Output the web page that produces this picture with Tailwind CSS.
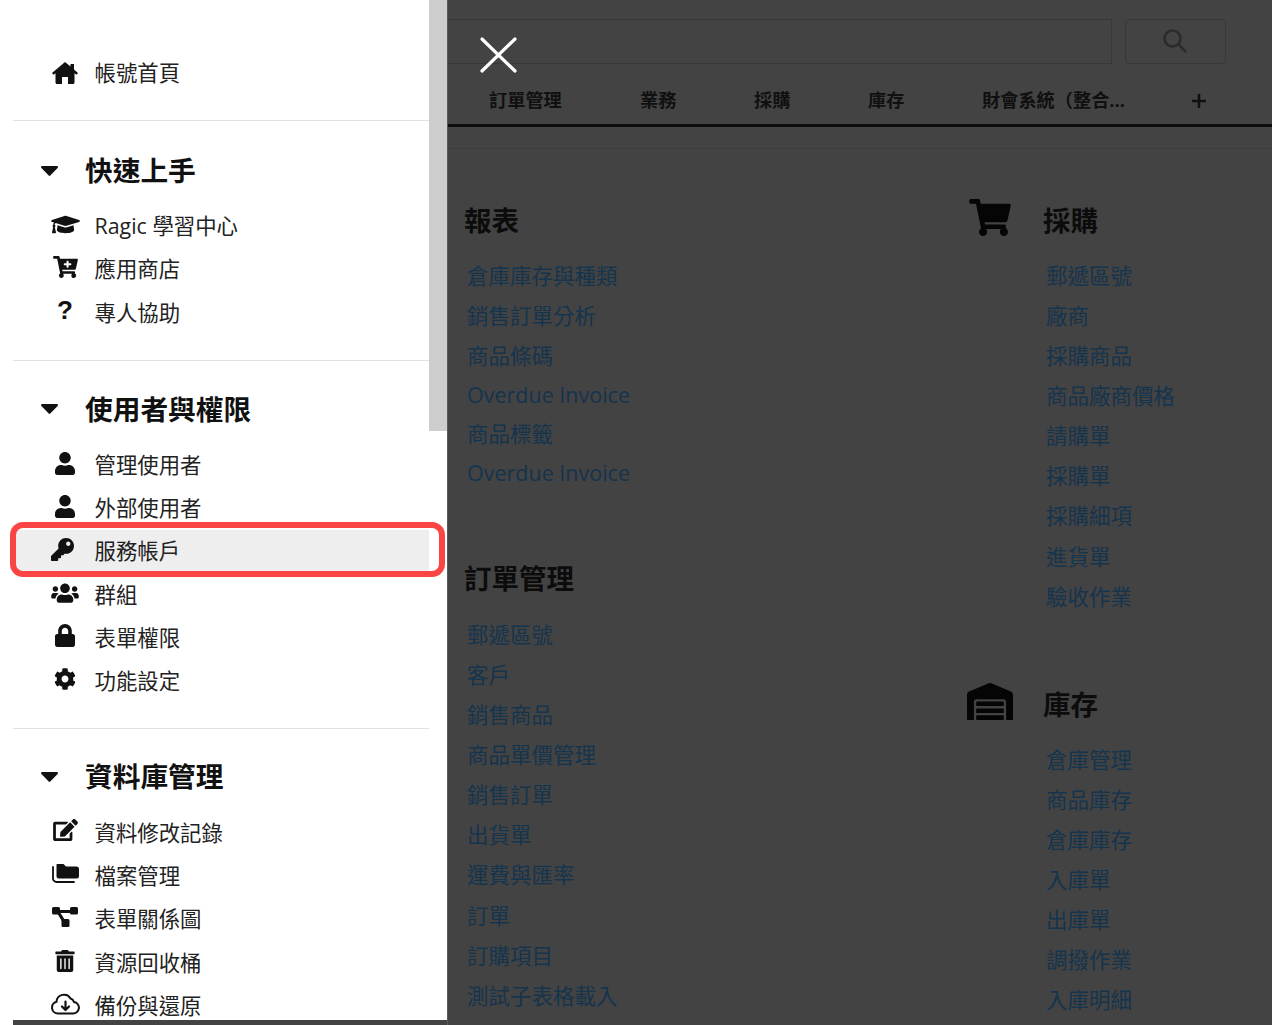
<!DOCTYPE html>
<html lang="zh-Hant">
<head>
  <meta charset="UTF-8" />
  <title>Ragic</title>
  <script src="https://cdn.jsdelivr.net/npm/@tailwindcss/browser@4"></script>
</head>
<body class="bg-[#434343]">
  <div class="relative flex w-[1272px] h-[1025px] overflow-hidden bg-[#434343] font-['Open_Sans','Noto_Sans_CJK_TC',sans-serif]">
    <!-- left strip runs past the panel bottom -->
    <div class="w-[13px] h-full bg-white shrink-0"></div>

    <!-- SIDEBAR -->
    <aside class="flex w-[434px] h-[1020px] bg-white shrink-0 overflow-hidden">
      <div class="w-[416px] text-[21.4px] text-[#222]">
        <section class="pt-[52px] pb-[25px] border-b border-[#dde2e2]">
          <div class="flex items-center h-[43px]">
            <span class="flex justify-center items-center w-[34px] ml-[35px] mr-[12.5px] -translate-y-[1px]"><svg class="w-[26px] h-[22px]" viewBox="0 0 26 22" fill="#111"><path d="M13 0l5.500 4.500V2H22v5.500l4 3.500-1.500 1.800-2-1.600v9.300c0 .8-.7 1.500-1.500 1.500h-5v-7h-6v7H5c-.8 0-1.500-.7-1.500-1.500v-9.300l-2 1.600L0 11z"/></svg></span>
            <span>帳號首頁</span>
          </div>
        </section>

        <section class="pt-[27.5px] pb-[26px] border-b border-[#dde2e2]">
          <div class="flex items-center h-[44px] mb-[12px]">
            <svg class="w-[17px] h-[10px] ml-[28px] mr-[27px]" viewBox="0 0 17 10" fill="#111"><path d="M1.2 0h14.600c1 0 1.500 1.200.8 1.900L9.300 9.500c-.4.500-1.200.5-1.600 0L.4 1.900C-.3 1.200.2 0 1.200 0z"/></svg>
            <h2 class="text-[27.7px] font-bold text-[#111]">快速上手</h2>
          </div>
          <div class="flex items-center h-[43.33px]">
            <span class="flex justify-center items-center w-[34px] ml-[35px] mr-[12.5px] -translate-y-[2px]"><svg class="w-[29px] h-[23px]" viewBox="0 0 640 512" fill="#111"><path d="M622.34 153.2L343.4 67.5c-15.2-4.67-31.6-4.67-46.79 0L17.66 153.2c-23.54 7.23-23.54 38.36 0 45.59l48.63 14.94c-10.67 13.19-17.23 29.28-17.88 46.9C38.78 266.15 32 276.11 32 288c0 10.78 5.68 19.85 13.86 25.65L20.33 428.53C18.11 438.52 25.71 448 35.94 448h56.11c10.24 0 17.84-9.48 15.62-19.47L82.14 313.65C90.32 307.85 96 298.78 96 288c0-11.57-6.47-21.25-15.66-26.87.76-15.02 8.44-28.3 20.69-36.72L296.6 284.5c9.06 2.78 26.44 6.25 46.79 0l278.95-85.7c23.55-7.24 23.55-38.36 0-45.6zM352.79 315.09c-28.53 8.76-52.84 3.92-65.59 0l-145.02-44.55L128 384c0 35.35 85.96 64 192 64s192-28.65 192-64l-14.18-113.47-145.03 44.56z"/></svg></span>
            <span>Ragic 學習中心</span>
          </div>
          <div class="flex items-center h-[43.33px]">
            <span class="flex justify-center items-center w-[34px] ml-[35px] mr-[12.5px] -translate-y-[2px]"><svg class="w-[25px] h-[22px]" viewBox="0 0 576 512" fill="#111"><path d="M504.717 320H211.572l6.545 32h268.418c15.401 0 26.816 14.301 23.403 29.319l-5.517 24.276C523.112 414.668 536 433.828 536 456c0 31.202-25.519 56.444-56.824 55.994-29.823-.429-54.35-24.631-55.155-54.447-.44-16.287 6.085-31.049 16.803-41.548H231.176C241.553 426.165 248 440.326 248 456c0 31.813-26.528 57.431-58.67 55.938-28.54-1.325-51.751-24.385-53.251-52.917-1.158-22.034 10.436-41.455 28.051-51.586L93.883 64H24C10.745 64 0 53.255 0 40V24C0 10.745 10.745 0 24 0h102.529c11.401 0 21.228 8.021 23.513 19.19L159.208 64H551.99c15.401 0 26.816 14.301 23.403 29.319l-47.273 208C525.637 312.246 515.923 320 504.717 320zM408 168h-48v-40c0-8.837-7.163-16-16-16h-16c-8.837 0-16 7.163-16 16v40h-48c-8.837 0-16 7.163-16 16v16c0 8.837 7.163 16 16 16h48v40c0 8.837 7.163 16 16 16h16c8.837 0 16-7.163 16-16v-40h48c8.837 0 16-7.163 16-16v-16c0-8.837-7.163-16-16-16z"/></svg></span>
            <span>應用商店</span>
          </div>
          <div class="flex items-center h-[43.33px]">
            <span class="flex justify-center items-center w-[34px] ml-[35px] mr-[12.5px] -translate-y-[2px] font-['Liberation_Sans',sans-serif] font-bold text-[26px] text-[#111]">?</span>
            <span>專人協助</span>
          </div>
        </section>

        <section class="pt-[26px] pb-[25px] border-b border-[#dde2e2]">
          <div class="flex items-center h-[44px] mb-[11.5px]">
            <svg class="w-[17px] h-[10px] ml-[28px] mr-[27px]" viewBox="0 0 17 10" fill="#111"><path d="M1.2 0h14.600c1 0 1.500 1.200.8 1.900L9.300 9.500c-.4.500-1.200.5-1.600 0L.4 1.900C-.3 1.200.2 0 1.200 0z"/></svg>
            <h2 class="text-[27.7px] font-bold text-[#111]">使用者與權限</h2>
          </div>
          <div class="flex items-center h-[43.33px]">
            <span class="flex justify-center items-center w-[34px] ml-[35px] mr-[12.5px] -translate-y-[1px]"><svg class="w-[20px] h-[23px]" viewBox="0 0 448 512" fill="#111"><path d="M224 256c70.7 0 128-57.3 128-128S294.7 0 224 0 96 57.3 96 128s57.3 128 128 128zm89.6 32h-16.7c-22.2 10.2-46.9 16-72.9 16s-50.6-5.8-72.9-16h-16.7C60.2 288 0 348.2 0 422.4V464c0 26.5 21.5 48 48 48h352c26.5 0 48-21.5 48-48v-41.6c0-74.2-60.2-134.4-134.4-134.4z"/></svg></span>
            <span>管理使用者</span>
          </div>
          <div class="flex items-center h-[43.33px]">
            <span class="flex justify-center items-center w-[34px] ml-[35px] mr-[12.5px] -translate-y-[1px]"><svg class="w-[20px] h-[23px]" viewBox="0 0 448 512" fill="#111"><path d="M224 256c70.7 0 128-57.3 128-128S294.7 0 224 0 96 57.3 96 128s57.3 128 128 128zm89.6 32h-16.7c-22.2 10.2-46.9 16-72.9 16s-50.6-5.8-72.9-16h-16.7C60.2 288 0 348.2 0 422.4V464c0 26.5 21.5 48 48 48h352c26.5 0 48-21.5 48-48v-41.6c0-74.2-60.2-134.4-134.4-134.4z"/></svg></span>
            <span>外部使用者</span>
          </div>
          <div class="flex items-center h-[43.33px] bg-[#eeeeee]">
            <span class="flex justify-center items-center w-[34px] ml-[32px] mr-[15.5px] -translate-y-[2px]"><svg class="w-[23px] h-[23px]" viewBox="0 0 512 512" fill="#111"><path d="M512 176.001C512 273.203 433.202 352 336 352c-11.22 0-22.19-1.062-32.827-3.069l-24.012 27.014A23.999 23.999 0 0 1 261.223 384H224v40c0 13.255-10.745 24-24 24h-40v40c0 13.255-10.745 24-24 24H24c-13.255 0-24-10.745-24-24v-78.059c0-6.365 2.529-12.47 7.029-16.971l161.802-161.802C163.108 213.814 160 195.271 160 176 160 78.798 238.797.001 335.999 0 433.488-.001 512 78.511 512 176.001zM336 128c0 26.51 21.49 48 48 48s48-21.49 48-48-21.49-48-48-48-48 21.49-48 48z"/></svg></span>
            <span>服務帳戶</span>
          </div>
          <div class="flex items-center h-[43.33px]">
            <span class="flex justify-center items-center w-[34px] ml-[35px] mr-[12.5px] -translate-y-[2px]"><svg class="w-[28px] h-[22px]" viewBox="0 0 640 512" fill="#111"><path d="M96 224c35.3 0 64-28.7 64-64s-28.7-64-64-64-64 28.7-64 64 28.7 64 64 64zm448 0c35.3 0 64-28.7 64-64s-28.7-64-64-64-64 28.7-64 64 28.7 64 64 64zm32 32h-64c-17.6 0-33.5 7.1-45.1 18.6 40.3 22.1 68.9 62 75.1 109.4h66c17.7 0 32-14.3 32-32v-32c0-35.3-28.7-64-64-64zm-256 0c61.9 0 112-50.1 112-112S381.9 32 320 32 208 82.1 208 144s50.1 112 112 112zm76.8 32h-8.3c-20.8 10-43.9 16-68.5 16s-47.6-6-68.5-16h-8.3C179.6 288 128 339.6 128 403.2V432c0 26.5 21.5 48 48 48h288c26.5 0 48-21.5 48-48v-28.8c0-63.6-51.6-115.2-115.2-115.2zm-223.7-13.4C161.5 263.1 145.6 256 128 256H64c-35.3 0-64 28.7-64 64v32c0 17.7 14.3 32 32 32h65.9c6.3-47.4 34.9-87.3 75.2-109.4z"/></svg></span>
            <span>群組</span>
          </div>
          <div class="flex items-center h-[43.33px]">
            <span class="flex justify-center items-center w-[34px] ml-[35px] mr-[12.5px] -translate-y-[2px]"><svg class="w-[20px] h-[23px]" viewBox="0 0 448 512" fill="#111"><path d="M400 224h-24v-72C376 68.2 307.8 0 224 0S72 68.2 72 152v72H48c-26.5 0-48 21.5-48 48v192c0 26.5 21.5 48 48 48h352c26.5 0 48-21.5 48-48V272c0-26.5-21.5-48-48-48zm-104 0H152v-72c0-39.7 32.3-72 72-72s72 32.3 72 72v72z"/></svg></span>
            <span>表單權限</span>
          </div>
          <div class="flex items-center h-[43.33px]">
            <span class="flex justify-center items-center w-[34px] ml-[35px] mr-[12.5px] -translate-y-[2px]"><svg class="w-[22px] h-[22px]" viewBox="0 0 512 512" fill="#111"><path d="M487.4 315.7l-42.6-24.6c4.3-23.2 4.3-47 0-70.2l42.6-24.6c4.9-2.8 7.1-8.6 5.5-14-11.1-35.6-30-67.8-54.7-94.6-3.8-4.1-10-5.1-14.8-2.3L380.8 110c-17.9-15.4-38.5-27.3-60.8-35.1V25.8c0-5.6-3.9-10.5-9.4-11.7-36.7-8.2-74.3-7.8-109.2 0-5.5 1.2-9.4 6.1-9.4 11.7V75c-22.2 7.9-42.8 19.8-60.8 35.1L88.7 85.5c-4.9-2.8-11-1.9-14.8 2.3-24.7 26.7-43.6 58.9-54.7 94.6-1.7 5.4.6 11.2 5.5 14L67.3 221c-4.3 23.2-4.3 47 0 70.2l-42.6 24.6c-4.9 2.8-7.1 8.6-5.5 14 11.1 35.6 30 67.8 54.7 94.6 3.8 4.1 10 5.1 14.8 2.3l42.6-24.6c17.9 15.4 38.5 27.3 60.8 35.1v49.2c0 5.6 3.9 10.5 9.4 11.7 36.7 8.2 74.3 7.8 109.2 0 5.5-1.2 9.4-6.1 9.4-11.7v-49.2c22.2-7.9 42.8-19.8 60.8-35.1l42.6 24.6c4.9 2.8 11 1.9 14.8-2.3 24.7-26.7 43.6-58.9 54.7-94.6 1.5-5.5-.7-11.3-5.6-14.1zM256 336c-44.1 0-80-35.9-80-80s35.9-80 80-80 80 35.9 80 80-35.9 80-80 80z"/></svg></span>
            <span>功能設定</span>
          </div>
        </section>

        <section class="pt-[26px]">
          <div class="flex items-center h-[44px] mb-[12px]">
            <svg class="w-[17px] h-[10px] ml-[28px] mr-[27px]" viewBox="0 0 17 10" fill="#111"><path d="M1.2 0h14.600c1 0 1.500 1.200.8 1.900L9.300 9.500c-.4.500-1.200.5-1.600 0L.4 1.900C-.3 1.200.2 0 1.200 0z"/></svg>
            <h2 class="text-[27.7px] font-bold text-[#111]">資料庫管理</h2>
          </div>
          <div class="flex items-center h-[43.33px]">
            <span class="flex justify-center items-center w-[34px] ml-[35px] mr-[12.5px] -translate-y-[3px]"><svg class="w-[25px] h-[22px]" viewBox="0 0 576 512" fill="#111"><path d="M402.6 83.2l90.2 90.2c3.8 3.8 3.8 10 0 13.8L274.4 405.6l-92.8 10.3c-12.4 1.4-22.9-9.1-21.5-21.5l10.3-92.8L388.8 83.2c3.8-3.8 10-3.8 13.8 0zm162-22.9l-48.8-48.8c-15.2-15.2-39.9-15.2-55.2 0l-35.4 35.4c-3.8 3.8-3.8 10 0 13.8l90.2 90.2c3.8 3.8 10 3.8 13.8 0l35.4-35.4c15.2-15.3 15.2-40 0-55.2zM384 346.2V448H64V128h229.8c3.2 0 6.2-1.3 8.5-3.5l40-40c7.6-7.6 2.2-20.5-8.5-20.5H48C21.5 64 0 85.5 0 112v352c0 26.5 21.5 48 48 48h352c26.5 0 48-21.5 48-48V306.2c0-10.7-12.9-16-20.5-8.5l-40 40c-2.2 2.3-3.5 5.3-3.5 8.5z"/></svg></span>
            <span>資料修改記錄</span>
          </div>
          <div class="flex items-center h-[43.33px]">
            <span class="flex justify-center items-center w-[34px] ml-[35px] mr-[12.5px] -translate-y-[2px]"><svg class="w-[27px] h-[19px]" viewBox="0 0 27 19" fill="#111"><path d="M5 0h6.500l2.500 2.500h10.500a2.500 2.500 0 0 1 2.500 2.500v7a2.500 2.500 0 0 1-2.500 2.500H7a2.500 2.500 0 0 1-2.500-2.500V1a1 1 0 0 1 .5-1z"/><path d="M1 3v11.500a3.500 3.500 0 0 0 3.500 3.500H22" fill="none" stroke="#111" stroke-width="1.800" stroke-linecap="round"/></svg></span>
            <span>檔案管理</span>
          </div>
          <div class="flex items-center h-[43.33px]">
            <span class="flex justify-center items-center w-[34px] ml-[35px] mr-[12.5px] -translate-y-[2px]"><svg class="w-[26px] h-[20px]" viewBox="0 0 26 20" fill="#111"><rect x="0" y="0" width="8" height="7.500" rx="1.500"/><rect x="18" y="0" width="8" height="7.500" rx="1.500"/><rect x="9.500" y="12" width="8" height="8" rx="1.500"/><path d="M6 3h14v3H8.500l5 8-2.500 2-6-10z"/></svg></span>
            <span>表單關係圖</span>
          </div>
          <div class="flex items-center h-[43.33px]">
            <span class="flex justify-center items-center w-[34px] ml-[35px] mr-[12.5px] -translate-y-[2px]"><svg class="w-[20px] h-[22px]" viewBox="0 0 448 512" fill="#111"><path d="M32 464a48 48 0 0 0 48 48h288a48 48 0 0 0 48-48V128H32zm272-256a16 16 0 0 1 32 0v224a16 16 0 0 1-32 0zm-96 0a16 16 0 0 1 32 0v224a16 16 0 0 1-32 0zm-96 0a16 16 0 0 1 32 0v224a16 16 0 0 1-32 0zM432 32H312l-9.400-18.700A24 24 0 0 0 281.100 0H166.800a23.720 23.720 0 0 0-21.400 13.300L136 32H16A16 16 0 0 0 0 48v32a16 16 0 0 0 16 16h416a16 16 0 0 0 16-16V48a16 16 0 0 0-16-16z"/></svg></span>
            <span>資源回收桶</span>
          </div>
          <div class="flex items-center h-[43.33px]">
            <span class="flex justify-center items-center w-[34px] ml-[35px] mr-[12.5px] -translate-y-[2px]"><svg class="w-[29px] h-[22px]" viewBox="0 0 29 22" fill="none" stroke="#111"><path d="M8 20.500H7a6 6 0 0 1-1.500-11.800A7.500 7.500 0 0 1 19.500 5.500a5 5 0 0 1 3.500 3.500 5.800 5.800 0 0 1-1.500 11.500z" stroke-width="2"/><path d="M14.500 8.500v8M11 13.500l3.500 3.500 3.500-3.500" stroke-width="2.200" stroke-linecap="round" stroke-linejoin="round"/></svg></span>
            <span>備份與還原</span>
          </div>
        </section>
      </div>
      <!-- scrollbar -->
      <div class="w-[18px] h-full bg-white">
        <div class="h-[431px] bg-[#cdcdcd]"></div>
      </div>
    </aside>

    <!-- DIMMED PAGE -->
    <main class="flex-1 min-w-0 border-l border-[#5a5a5a]">
      <div class="flex gap-[13px] mt-[19px] pr-[46px] h-[45px]">
        <div class="flex-1 border border-l-0 border-[#383838]"></div>
        <div class="flex justify-center items-center w-[101px] border border-[#383838] rounded-[4px]">
          <svg class="w-[26px] h-[26px] mb-[2px] -translate-x-[1px]" viewBox="0 0 26 26" fill="none" stroke="#2b2b2b" stroke-width="2.600"><circle cx="10.500" cy="10.500" r="8"/><path d="M16.500 16.500l7 7" stroke-linecap="round"/></svg>
        </div>
      </div>

      <nav class="flex items-center h-[49px] mt-[14px] pl-[41px] pt-[1px] pb-[2px] border-b-[3px] border-[#0d0d0d] text-[18.2px] font-bold text-[#101010]">
        <a class="w-[151px]">訂單管理</a>
        <a class="w-[114px]">業務</a>
        <a class="w-[114px]">採購</a>
        <a class="w-[114px]">庫存</a>
        <a class="w-[209px] whitespace-nowrap">財會系統（整合...</a>
        <svg class="w-[16px] h-[16px]" viewBox="0 0 16 16" stroke="#101010" stroke-width="2.500"><path d="M8 1v14M1 8h14"/></svg>
      </nav>

      <div class="flex mt-[21px] pl-[16px] border-t border-[#3d3d3d] text-[21.5px] text-[#15344e]">
        <div class="w-[503px] shrink-0">
          <h3 class="flex items-center h-[40px] mt-[52px] mb-[15px] text-[27.5px] font-bold text-[#0c0c0c]">報表</h3>
          <div class="ml-[3px] flex flex-col">
            <a class="flex items-center h-[40px]">倉庫庫存與種類</a>
            <a class="flex items-center h-[40px]">銷售訂單分析</a>
            <a class="flex items-center h-[40px]">商品條碼</a>
            <a class="flex items-center h-[39px]">Overdue Invoice</a>
            <a class="flex items-center h-[39px]">商品標籤</a>
            <a class="flex items-center h-[39px]">Overdue Invoice</a>
          </div>
          <h3 class="flex items-center h-[40px] mt-[66px] mb-[16px] text-[27.5px] font-bold text-[#0c0c0c]">訂單管理</h3>
          <div class="ml-[3px] flex flex-col">
            <a class="flex items-center h-[40.1px] shrink-0">郵遞區號</a>
            <a class="flex items-center h-[40.1px] shrink-0">客戶</a>
            <a class="flex items-center h-[40.1px] shrink-0">銷售商品</a>
            <a class="flex items-center h-[40.1px] shrink-0">商品單價管理</a>
            <a class="flex items-center h-[40.1px] shrink-0">銷售訂單</a>
            <a class="flex items-center h-[40.1px] shrink-0">出貨單</a>
            <a class="flex items-center h-[40.1px] shrink-0">運費與匯率</a>
            <a class="flex items-center h-[40.1px] shrink-0">訂單</a>
            <a class="flex items-center h-[40.1px] shrink-0">訂購項目</a>
            <a class="flex items-center h-[40.1px] shrink-0">測試子表格載入</a>
          </div>
        </div>

        <div class="flex-1 min-w-0">
          <h3 class="flex items-center h-[40px] mt-[52px] mb-[15px] text-[27.5px] font-bold text-[#0c0c0c]">
            <span class="flex justify-center w-[46px] mr-[30px] mb-[7px]"><svg class="w-[42px] h-[37px]" viewBox="0 0 576 512" fill="#050505"><path d="M528.12 301.319l47.273-208C578.806 78.301 567.391 64 551.99 64H159.208l-9.166-44.81C147.758 8.021 137.93 0 126.529 0H24C10.745 0 0 10.745 0 24v16c0 13.255 10.745 24 24 24h69.883l70.248 343.435C147.325 417.1 136 435.222 136 456c0 30.928 25.072 56 56 56s56-25.072 56-56c0-15.674-6.447-29.835-16.824-40h209.647C430.447 426.165 424 440.326 424 456c0 30.928 25.072 56 56 56s56-25.072 56-56c0-22.172-12.888-41.332-31.579-50.405l5.517-24.276c3.413-15.018-8.002-29.319-23.403-29.319H218.117l-6.545-32h293.145c11.206 0 20.92-7.754 23.403-18.681z"/></svg></span>
            採購
          </h3>
          <div class="ml-[79px] flex flex-col">
            <a class="flex items-center h-[40.1px] shrink-0">郵遞區號</a>
            <a class="flex items-center h-[40.1px] shrink-0">廠商</a>
            <a class="flex items-center h-[40.1px] shrink-0">採購商品</a>
            <a class="flex items-center h-[40.1px] shrink-0">商品廠商價格</a>
            <a class="flex items-center h-[40.1px] shrink-0">請購單</a>
            <a class="flex items-center h-[40.1px] shrink-0">採購單</a>
            <a class="flex items-center h-[40.1px] shrink-0">採購細項</a>
            <a class="flex items-center h-[40.1px] shrink-0">進貨單</a>
            <a class="flex items-center h-[40.1px] shrink-0">驗收作業</a>
          </div>
          <h3 class="flex items-center h-[40px] mt-[68px] mb-[15px] text-[27.5px] font-bold text-[#0c0c0c]">
            <span class="flex justify-center w-[46px] mr-[30px] mb-[7px]"><svg class="w-[46px] h-[37px]" viewBox="0 0 640 512" fill="#050505"><path d="M504 352H136.400c-4.400 0-8 3.600-8 8l-.1 48c0 4.400 3.600 8 8 8H504c4.400 0 8-3.600 8-8v-48c0-4.400-3.600-8-8-8zm0 96H136.100c-4.400 0-8 3.600-8 8l-.1 48c0 4.400 3.600 8 8 8h368c4.400 0 8-3.600 8-8v-48c0-4.400-3.600-8-8-8zm0-192H136.600c-4.400 0-8 3.600-8 8l-.1 48c0 4.400 3.600 8 8 8H504c4.400 0 8-3.600 8-8v-48c0-4.400-3.600-8-8-8zm106.500-139L338.400 3.700a48.150 48.150 0 0 0-36.900 0L29.500 117C11.700 124.500 0 141.900 0 161.300V504c0 4.400 3.600 8 8 8h80c4.400 0 8-3.600 8-8V256c0-17.600 14.600-32 32.600-32h382.800c18 0 32.600 14.400 32.600 32v248c0 4.400 3.600 8 8 8h80c4.400 0 8-3.600 8-8V161.300c0-19.400-11.700-36.800-29.500-44.300z"/></svg></span>
            庫存
          </h3>
          <div class="ml-[79px] flex flex-col">
            <a class="flex items-center h-[40.1px] shrink-0">倉庫管理</a>
            <a class="flex items-center h-[40.1px] shrink-0">商品庫存</a>
            <a class="flex items-center h-[40.1px] shrink-0">倉庫庫存</a>
            <a class="flex items-center h-[40.1px] shrink-0">入庫單</a>
            <a class="flex items-center h-[40.1px] shrink-0">出庫單</a>
            <a class="flex items-center h-[40.1px] shrink-0">調撥作業</a>
            <a class="flex items-center h-[40.1px] shrink-0">入庫明細</a>
          </div>
        </div>
      </div>
    </main>

    <!-- close button sits over the dimmed page -->
    <svg class="absolute left-[480px] top-[37px] w-[37px] h-[36px]" viewBox="0 0 37 36" stroke="#fff" stroke-width="3.200" stroke-linecap="round"><path d="M2 2l33 32M35 2L2 34"/></svg>

    <!-- red annotation around 服務帳戶 -->
    <div class="absolute left-[10px] top-[522px] w-[435px] h-[55px] border-[6px] border-[#fb4444] rounded-[13px]"></div>
  </div>
</body>
</html>
